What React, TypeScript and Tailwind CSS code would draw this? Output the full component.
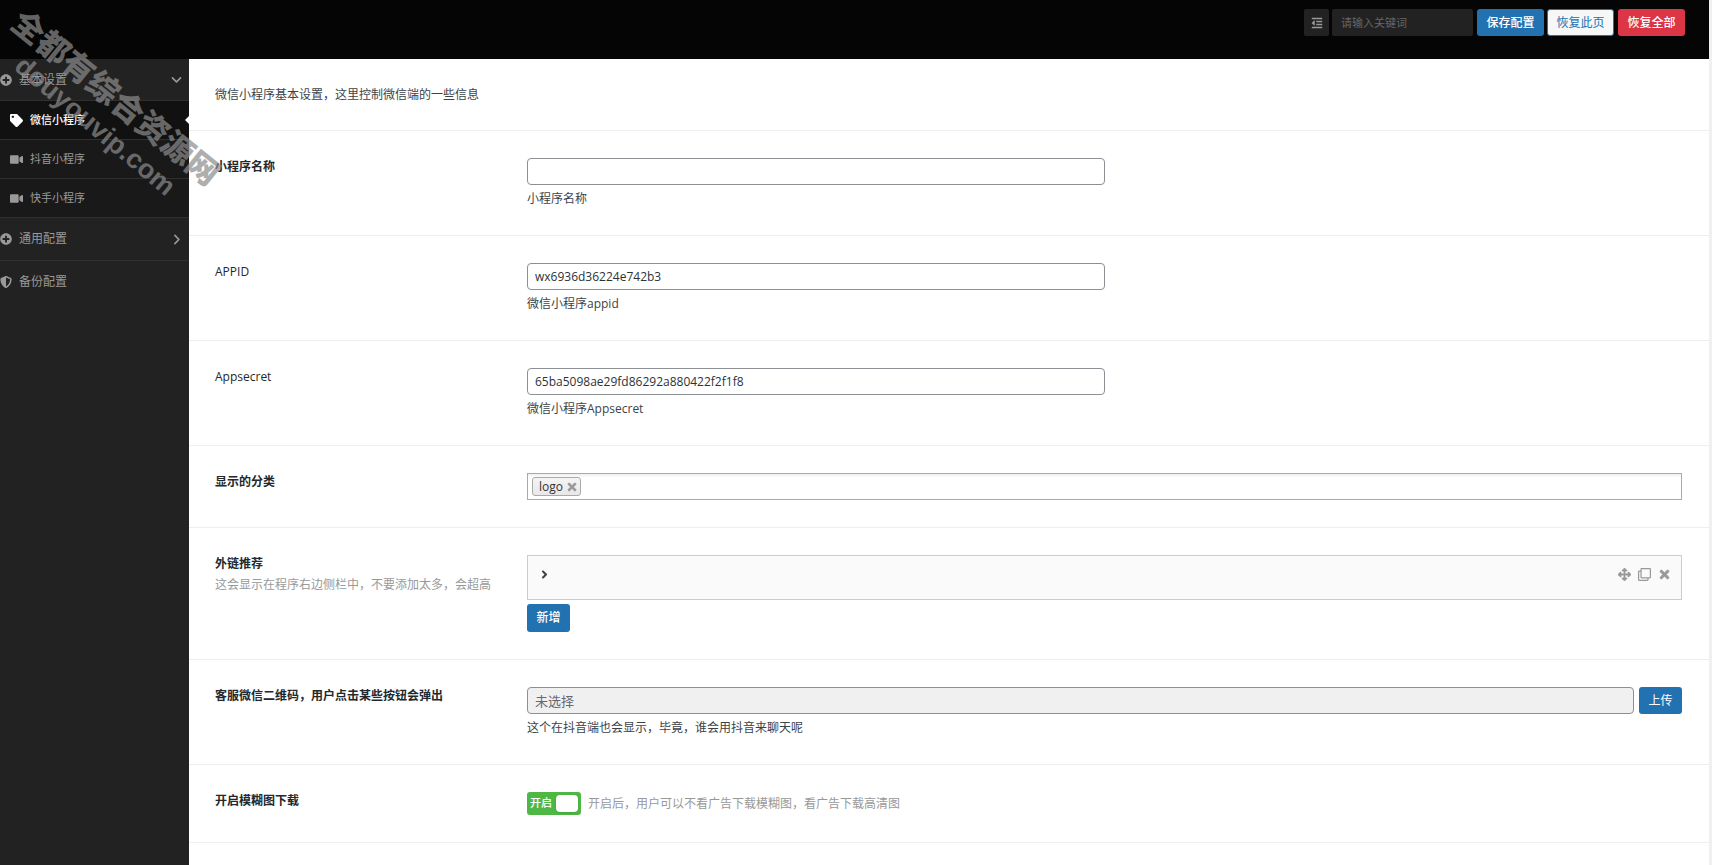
import React, { useState } from 'react';
import { FaPlusCircle, FaTag, FaVideo, FaShieldAlt, FaAngleRight, FaOutdent, FaArrowsAlt, FaRegClone, FaTimes } from 'react-icons/fa';
import { FaAngleDown as FaMenuOpen, FaAngleRight as FaMenuClosed } from 'react-icons/fa6';

interface FieldProps {
  title: string;
  subtitle?: string;
  htmlFor?: string;
  lightTitle?: boolean;
  children: React.ReactNode;
}

const Field: React.FC<FieldProps> = ({ title, subtitle, htmlFor, lightTitle, children }) => (
  <div className="flex border-b border-[#eeeeee] py-[27px] pr-[27px] pl-[26px]">
    <div className="w-[312px] shrink-0 pr-6">
      <label htmlFor={htmlFor} className={`block leading-[18px] text-[#23282d] ${lightTitle ? 'font-medium' : 'font-semibold'}`}>{title}</label>
      {subtitle && <p className="mt-0.5 leading-[19px] text-[#999999]">{subtitle}</p>}
    </div>
    <div className="min-w-0 flex-1">{children}</div>
  </div>
);

interface TextFieldProps {
  id: string;
  title: string;
  value: string;
  hint: string;
  lightTitle?: boolean;
  onChange: (value: string) => void;
}

const TextField: React.FC<TextFieldProps> = ({ id, title, value, hint, lightTitle, onChange }) => (
  <Field title={title} htmlFor={id} lightTitle={lightTitle}>
    <input
      id={id}
      type="text"
      value={value}
      onChange={(e) => onChange(e.target.value)}
      className="block h-[27px] w-1/2 rounded-[4px] border border-[#8c8f94] bg-white px-[7px] text-[12px] text-[#2c3338] outline-none"
    />
    <p className="mt-1 leading-[19px]">{hint}</p>
  </Field>
);

const subItems = [
  { label: '微信小程序', icon: FaTag, active: true },
  { label: '抖音小程序', icon: FaVideo, active: false },
  { label: '快手小程序', icon: FaVideo, active: false },
];

const Sidebar: React.FC = () => (
  <nav className="w-[189px] shrink-0 bg-[#222222] text-[#999999]">
    <a href="#basic" className="flex h-[42px] items-center border-b border-[#2f2f2f] pr-[6px]">
      <FaPlusCircle size={12} />
      <span className="ml-[7px] flex-1">基本设置</span>
      <FaMenuOpen size={13} />
    </a>
    <ul>
      {subItems.map(({ label, icon: Icon, active }) => (
        <li key={label}>
          <a
            href={`#${label}`}
            className={`relative flex h-[39px] items-center border-b border-[#2f2f2f] pl-[10px] text-[11px] ${active ? 'bg-[#111111] font-medium text-white' : 'bg-[#191919]'}`}
          >
            <Icon size={13} />
            <span className="ml-[7px]">{label}</span>
            {active && <span className="absolute right-0 h-0 w-0 border-y-4 border-r-4 border-y-transparent border-r-white" />}
          </a>
        </li>
      ))}
    </ul>
    <a href="#common" className="flex h-[43px] items-center border-b border-[#2f2f2f] pr-[6px]">
      <FaPlusCircle size={12} />
      <span className="ml-[7px] flex-1">通用配置</span>
      <FaMenuClosed size={13} />
    </a>
    <a href="#backup" className="flex h-[42px] items-center">
      <FaShieldAlt size={12} />
      <span className="ml-[7px]">备份配置</span>
    </a>
  </nav>
);

const Header: React.FC = () => (
  <header className="flex h-[59px] items-start justify-end gap-1 bg-[#050505] pt-[9px] pr-6">
    <div className="flex gap-[3px]">
      <button type="button" aria-label="展开" className="flex h-[27px] w-[25px] items-center justify-center rounded-[2px] bg-[#222222] text-[#999999]">
        <FaOutdent size={12} />
      </button>
      <input
        type="text"
        aria-label="搜索"
        placeholder="请输入关键词"
        className="h-[27px] w-[141px] rounded-[2px] bg-[#222222] px-[9px] text-[11px] text-[#999999] outline-none placeholder:text-[#666666]"
      />
    </div>
    <div className="flex gap-[3px]">
      <button type="button" className="h-[27px] w-[67px] rounded-[3px] bg-[#2271b1] font-medium text-white">保存配置</button>
      <button type="button" className="h-[27px] w-[67px] rounded-[3px] border border-[#2271b1] bg-[#f6f7f7] text-[#2271b1]">恢复此页</button>
    </div>
    <button type="button" className="h-[27px] w-[67px] rounded-[3px] bg-[#dc3545] font-medium text-white">恢复全部</button>
  </header>
);

const Watermark: React.FC = () => (
  <div aria-hidden="true" className="pointer-events-none absolute top-[27px] left-[29px] whitespace-nowrap text-[#8c8c8c] opacity-70">
    <div className="absolute -top-4 -left-4 origin-[16px_16px] rotate-39 text-[32px] leading-8 font-black">全都有综合资源网</div>
    <div className="absolute top-[24px] -left-3 origin-[8px_16px] rotate-40 font-['Liberation_Sans'] text-[27px] leading-8 font-bold">douyouvip.com</div>
  </div>
);

export default function App() {
  const [name, setName] = useState('');
  const [appId, setAppId] = useState('wx6936d36224e742b3');
  const [secret, setSecret] = useState('65ba5098ae29fd86292a880422f2f1f8');
  const [blurDownload, setBlurDownload] = useState(true);

  return (
    <div className="relative flex min-h-screen flex-col overflow-hidden border-r-[3px] border-[#f0f0f1] bg-white font-['Open_Sans','Noto_Sans_CJK_SC',sans-serif] text-[12px] text-[#3c434a]">
      <Header />
      <div className="flex flex-1">
        <Sidebar />
        <main className="min-w-0 flex-1">
          <p className="flex h-[72px] items-center border-b border-[#eeeeee] px-[26px]">微信小程序基本设置，这里控制微信端的一些信息</p>

          <TextField id="name" title="小程序名称" hint="小程序名称" value={name} onChange={setName} />
          <TextField id="appid" title="APPID" hint="微信小程序appid" lightTitle value={appId} onChange={setAppId} />
          <TextField id="appsecret" title="Appsecret" hint="微信小程序Appsecret" lightTitle value={secret} onChange={setSecret} />

          <Field title="显示的分类" htmlFor="category">
            <div className="flex h-[27px] items-center border border-[#aaaaaa] bg-linear-to-b from-[#eeeeee] to-white to-15% px-1">
              <span className="flex h-[19px] items-center gap-[3px] rounded-[3px] border border-[#aaaaaa] bg-linear-to-b from-[#f4f4f4] to-[#e8e8e8] pr-[2px] pl-1.5 leading-4 text-[#333333]">
                logo
                <button type="button" aria-label="移除 logo" className="text-[#999999]">
                  <FaTimes size={12} className="stroke-current stroke-[20px]" />
                </button>
              </span>
              <input id="category" type="text" className="h-full min-w-0 flex-1 bg-transparent px-1 outline-none" />
            </div>
          </Field>

          <Field title="外链推荐" subtitle="这会显示在程序右边侧栏中，不要添加太多，会超高">
            <div className="flex h-[45px] items-start justify-between border border-[#cccccc] bg-[#fafafa] px-[10px] pt-3">
              <button type="button" aria-label="展开外链" className="text-[#3c434a]">
                <FaAngleRight size={13} />
              </button>
              <div className="flex items-center gap-[7px] text-[#999999]">
                <button type="button" aria-label="移动"><FaArrowsAlt size={13} className="stroke-current stroke-[16px]" /></button>
                <button type="button" aria-label="复制"><FaRegClone size={13} /></button>
                <button type="button" aria-label="删除"><FaTimes size={13} className="stroke-current stroke-[30px]" /></button>
              </div>
            </div>
            <button type="button" className="mt-1 block h-7 w-[43px] rounded-[3px] bg-[#2271b1] font-medium text-white">新增</button>
          </Field>

          <Field title="客服微信二维码，用户点击某些按钮会弹出" htmlFor="qrcode">
            <div className="flex gap-[5px]">
              <input
                id="qrcode"
                type="text"
                readOnly
                placeholder="未选择"
                className="h-[27px] min-w-0 flex-1 rounded-[4px] border border-[#8c8f94] bg-[#f0f0f1] px-[7px] text-[13px] outline-none placeholder:text-[#646970]"
              />
              <button type="button" className="h-[27px] w-[43px] rounded-[3px] bg-[#2271b1] text-white">上传</button>
            </div>
            <p className="mt-1 leading-[19px]">这个在抖音端也会显示，毕竟，谁会用抖音来聊天呢</p>
          </Field>

          <Field title="开启模糊图下载" htmlFor="blur">
            <div className="flex items-center gap-[7px]">
              <label className={`flex h-[23px] w-[54px] items-center rounded-[3px] p-[3px] text-[11px] text-white ${blurDownload ? 'bg-[#4fb845]' : 'flex-row-reverse bg-[#999999]'}`}>
                <input id="blur" type="checkbox" className="sr-only" checked={blurDownload} onChange={(e) => setBlurDownload(e.target.checked)} />
                <span className="flex-1 font-medium">{blurDownload ? '开启' : '关闭'}</span>
                <span className="h-[17px] w-[22px] rounded-[4px] bg-white shadow-sm" />
              </label>
              <span className="text-[#999999]">开启后，用户可以不看广告下载模糊图，看广告下载高清图</span>
            </div>
          </Field>
        </main>
      </div>
      <Watermark />
    </div>
  );
}
